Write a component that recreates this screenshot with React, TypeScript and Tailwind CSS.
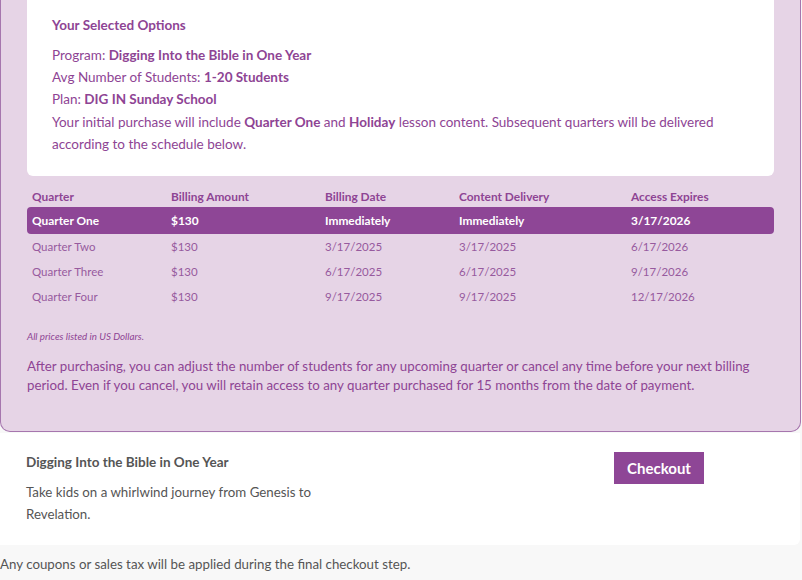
import React from "react";

const rows = [
  ["Quarter Two", "$130", "3/17/2025", "3/17/2025", "6/17/2026"],
  ["Quarter Three", "$130", "6/17/2025", "6/17/2025", "9/17/2026"],
  ["Quarter Four", "$130", "9/17/2025", "9/17/2025", "12/17/2026"],
];

export default function App() {
  return (
    <div
      className="w-[802px] min-h-[580px] bg-[#f8f8f8]"
      style={{ fontFamily: "Lato, 'Liberation Sans', sans-serif" }}
    >
      <div className="w-[801px] bg-[#e6d4e6] border-x border-b border-[#a676ae] rounded-b-[10px] px-[26px] pb-[36px]">
        <div className="bg-white rounded-b-[6px] px-[25px] pt-[14px] pb-[21px] text-[#8e4494] text-[13.5px] leading-[22px]">
          <div className="font-bold">Your Selected Options</div>
          <div className="mt-[8px]">
            Program: <span className="font-bold">Digging Into the Bible in One Year</span>
          </div>
          <div>
            Avg Number of Students: <span className="font-bold">1-20 Students</span>
          </div>
          <div>
            Plan: <span className="font-bold">DIG IN Sunday School</span>
          </div>
          <div className="mt-[1px]">
            Your initial purchase will include <span className="font-bold">Quarter One</span> and{" "}
            <span className="font-bold">Holiday</span> lesson content. Subsequent quarters will be delivered according to the schedule below.
          </div>
        </div>

        <div className="mt-[11px] text-[#8e4494]">
          <div className="grid grid-cols-[139px_154px_134px_172px_1fr] px-[5px] h-[20px] items-center font-bold text-[11.9px]">
            <div>Quarter</div>
            <div>Billing Amount</div>
            <div>Billing Date</div>
            <div>Content Delivery</div>
            <div>Access Expires</div>
          </div>
          <div className="grid grid-cols-[139px_154px_134px_172px_1fr] px-[5px] h-[27px] pt-[1px] items-center font-bold text-[11.9px] bg-[#8e4696] text-white rounded-[4px]">
            <div>Quarter One</div>
            <div>$130</div>
            <div>Immediately</div>
            <div>Immediately</div>
            <div>3/17/2026</div>
          </div>
          <div>
            {rows.map((r) => (
              <div
                key={r[0]}
                className="grid grid-cols-[139px_154px_134px_172px_1fr] px-[5px] h-[25px] items-center text-[11.5px] text-[#975a9e]"
              >
                {r.map((c, i) => (
                  <div key={i}>{c}</div>
                ))}
              </div>
            ))}
          </div>
        </div>

        <div className="mt-[20px] text-[9.75px] italic leading-[14px] text-[#8e4494]">
          All prices listed in US Dollars.
        </div>
        <div className="mt-[14px] text-[13.3px] leading-[19px] text-[#8e4494]">
          After purchasing, you can adjust the number of students for any upcoming quarter or cancel any time before your next billing period. Even if you cancel, you will retain access to any quarter purchased for 15 months from the date of payment.
        </div>
      </div>

      <div className="w-[800px] h-[112px] mt-[1px] bg-white rounded-br-[6px] flex">
        <div className="w-[300px] ml-[26px] pt-[19px]">
          <div className="font-bold text-[13.5px] leading-[20px] text-[#555]">
            Digging Into the Bible in One Year
          </div>
          <div className="mt-[9px] text-[13.3px] leading-[22px] text-[#555]">
            Take kids on a whirlwind journey from Genesis to Revelation.
          </div>
        </div>
        <div className="ml-[288px] mt-[19px]">
          <button className="w-[90px] h-[32px] bg-[#8e4696] text-white font-bold text-[15px]">
            Checkout
          </button>
        </div>
      </div>

      <div className="pt-[10px] text-[13.3px] leading-[18px] text-[#555]">
        Any coupons or sales tax will be applied during the final checkout step.
      </div>
    </div>
  );
}
